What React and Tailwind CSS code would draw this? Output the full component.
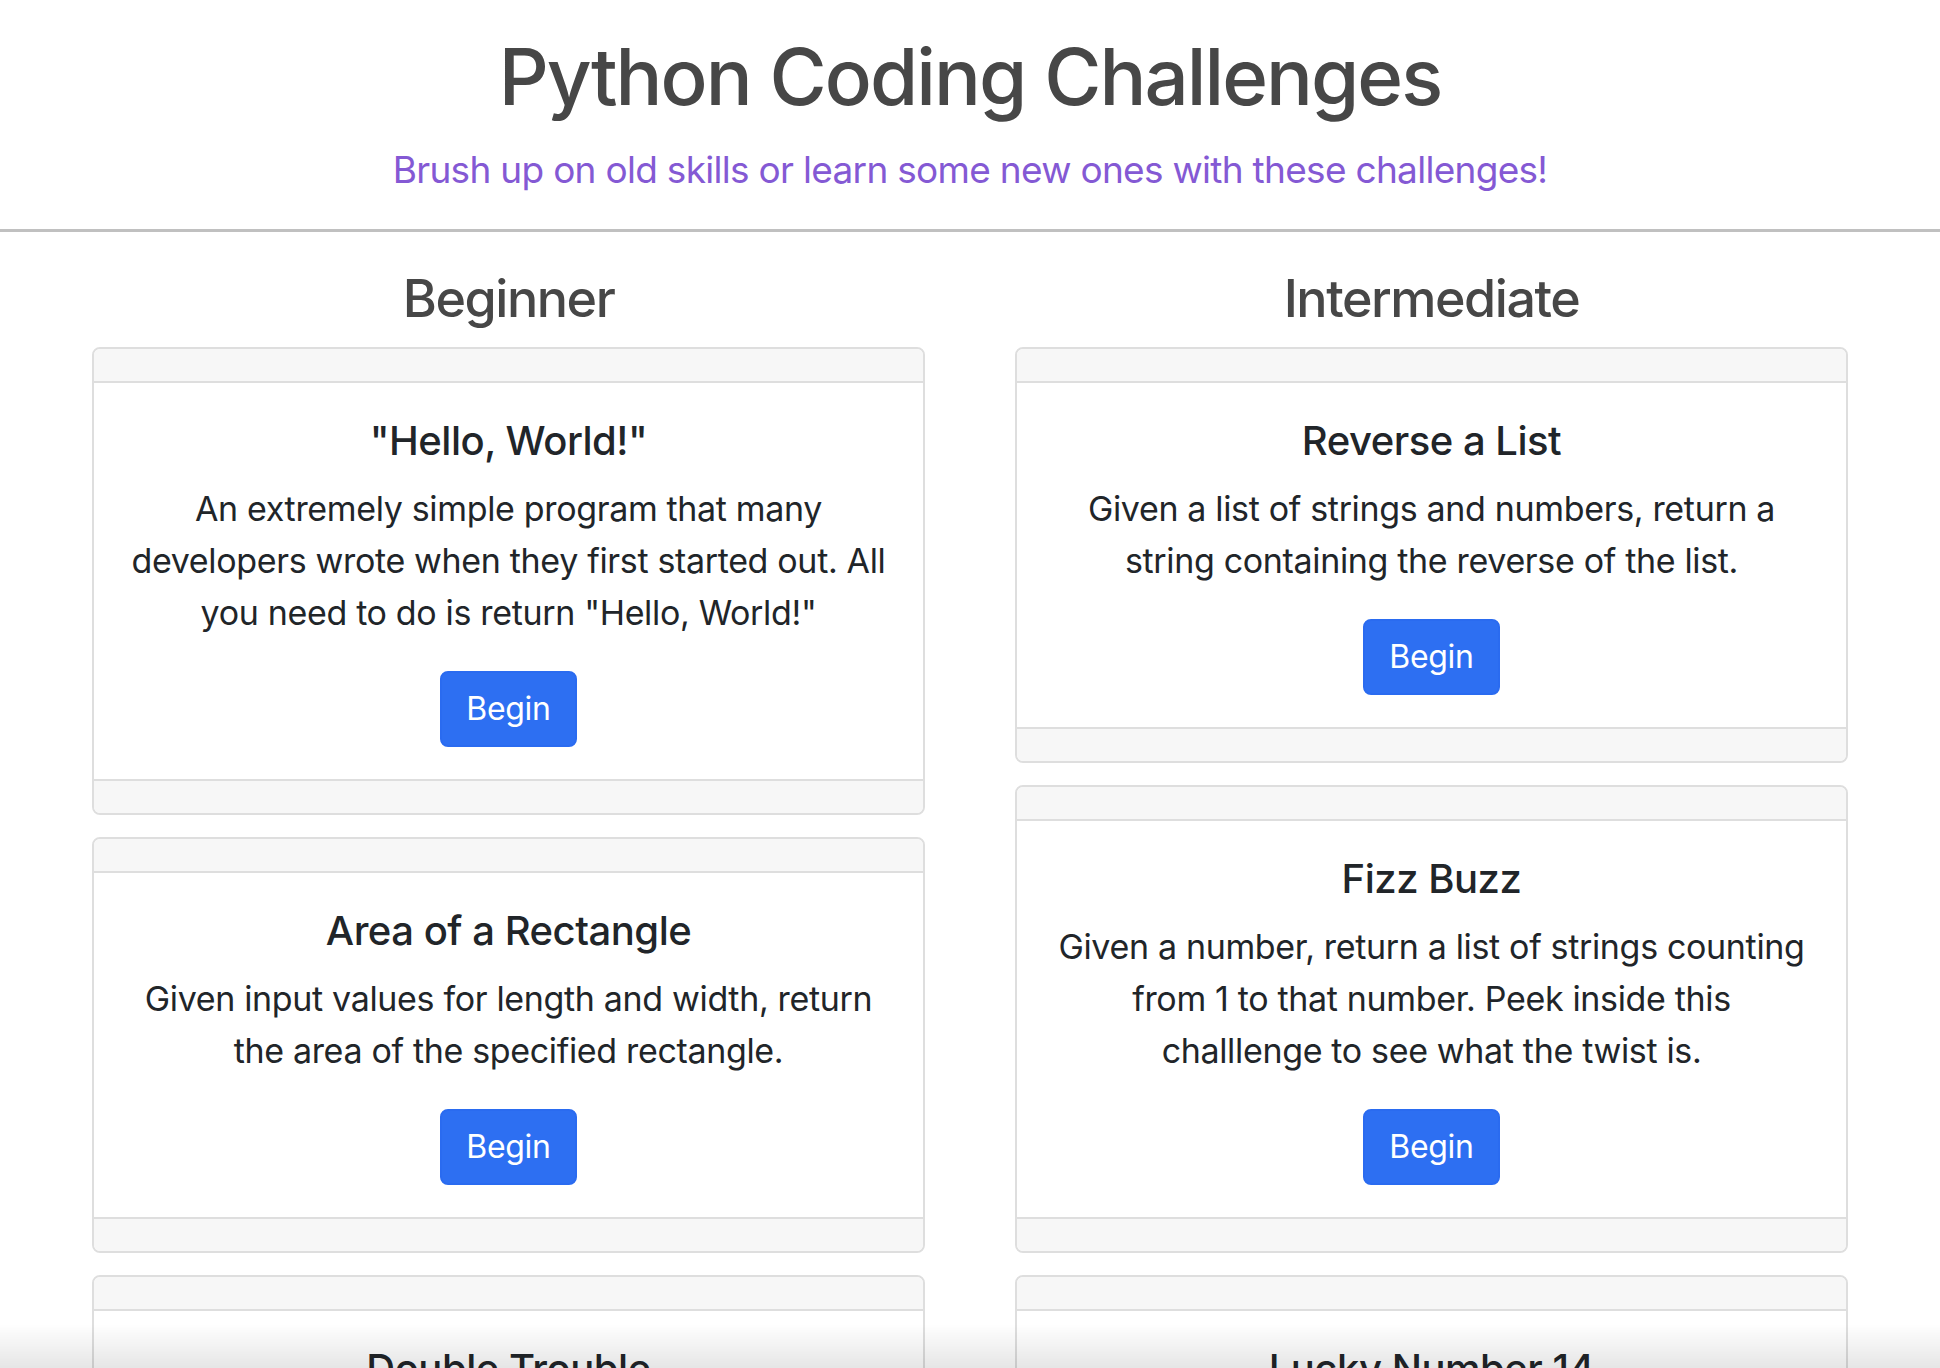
import React from "react";

const font = { fontFamily: '"Inter", "Noto Sans", sans-serif' };

function Card({ title, text }) {
  return (
    <div className="rounded-[8px] border-2 border-[#dedede] overflow-hidden bg-white">
      <div className="h-[34px] bg-[#f7f7f7] border-b-2 border-[#dedede]" />
      <div className="pt-[34px] pb-[32px] px-[32px] text-center">
        <h5 className="text-[40px] leading-[48px] font-medium tracking-[-0.012em] text-[#212529]">{title}</h5>
        <p className="mt-[18px] mb-[32px] text-[34px] leading-[52px] tracking-[-0.01em] text-[#212529]">{text}</p>
        <button className="px-[24px] py-[12px] text-[32px] leading-[48px] tracking-[-0.01em] text-white bg-[#2d6ff2] border-2 border-[#2a6bf0] rounded-[8px]">
          Begin
        </button>
      </div>
      <div className="h-[34px] bg-[#f7f7f7] border-t-2 border-[#dedede]" />
    </div>
  );
}

const beginner = [
  {
    title: '"Hello, World!"',
    text: 'An extremely simple program that many developers wrote when they first started out. All you need to do is return "Hello, World!"',
  },
  {
    title: "Area of a Rectangle",
    text: "Given input values for length and width, return the area of the specified rectangle.",
  },
  {
    title: "Double Trouble",
    text: "Given a list of numbers, return a new list with every number doubled.",
  },
];

const intermediate = [
  {
    title: "Reverse a List",
    text: "Given a list of strings and numbers, return a string containing the reverse of the list.",
  },
  {
    title: "Fizz Buzz",
    text: "Given a number, return a list of strings counting from 1 to that number. Peek inside this challlenge to see what the twist is.",
  },
  {
    title: "Lucky Number 14",
    text: "Given a list of numbers, find out whether any two of them add up to 14.",
  },
];

function Column({ heading, items }) {
  return (
    <div>
      <h3 className="text-center text-[52px] leading-[67px] font-medium tracking-[-0.028em] text-[#474747] mb-[15px]">{heading}</h3>
      <div className="flex flex-col gap-[22px]">
        {items.map((c) => (
          <Card key={c.title} {...c} />
        ))}
      </div>
    </div>
  );
}

export default function App() {
  return (
    <div className="min-h-screen bg-white" style={font}>
      <header className="text-center pt-[29px] pb-[35px]">
        <h1 className="text-[78px] leading-[96px] font-medium tracking-[-0.025em] text-[#474747]">Python Coding Challenges</h1>
        <p className="mt-[21px] text-[37px] leading-[48px] tracking-[-0.019em] text-[#8459d4]">
          Brush up on old skills or learn some new ones with these challenges!
        </p>
      </header>
      <div className="h-[3px] bg-[#c0c0c0]" />
      <main className="grid grid-cols-2 gap-[90px] px-[92px] pt-[33px] pb-[60px]">
        <Column heading="Beginner" items={beginner} />
        <Column heading="Intermediate" items={intermediate} />
      </main>
      <div className="fixed bottom-0 left-0 right-0 h-[44px] bg-gradient-to-b from-transparent to-black/10 pointer-events-none" />
    </div>
  );
}
